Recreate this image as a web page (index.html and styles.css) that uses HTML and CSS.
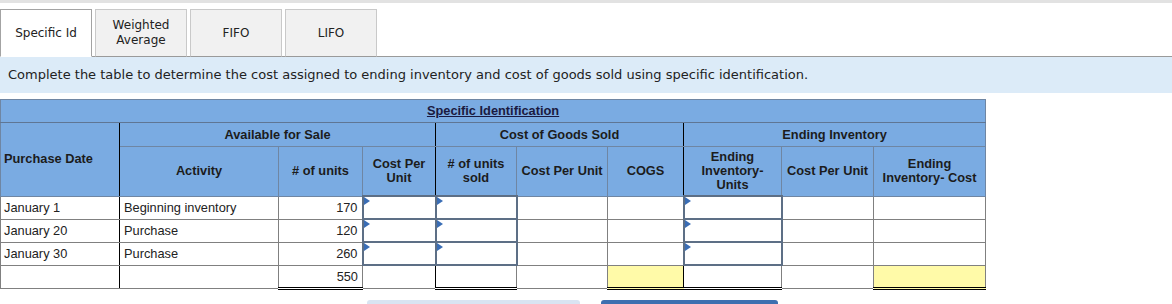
FILE: index.html
```html
<!DOCTYPE html>
<html lang="en">
<head>
    <meta charset="UTF-8">
    <title>Specific Identification</title>
    <link rel="stylesheet" href="styles.css">
</head>
<body>
    <div class="topline"></div>

    <div class="tabs">
        <div class="tab active">Specific Id</div>
        <div class="tab">Weighted<br>Average</div>
        <div class="tab">FIFO</div>
        <div class="tab">LIFO</div>
    </div>

    <div class="instructions">
        Complete the table to determine the cost assigned to ending inventory and cost of goods sold using specific identification.
    </div>

    <table class="worksheet">
        <colgroup>
            <col style="width: 119px">
            <col style="width: 159px">
            <col style="width: 84px">
            <col style="width: 73px">
            <col style="width: 81px">
            <col style="width: 91px">
            <col style="width: 76px">
            <col style="width: 98px">
            <col style="width: 92px">
            <col style="width: 112px">
        </colgroup>
        <thead>
            <tr class="title-row">
                <th colspan="10"><u>Specific Identification</u></th>
            </tr>
            <tr class="group-row">
                <th rowspan="2" class="edge left">Purchase Date</th>
                <th colspan="3" class="edge">Available for Sale</th>
                <th colspan="3" class="edge">Cost of Goods Sold</th>
                <th colspan="3">Ending Inventory</th>
            </tr>
            <tr class="label-row">
                <th>Activity</th>
                <th># of units</th>
                <th class="edge">Cost Per<br>Unit</th>
                <th># of units<br>sold</th>
                <th>Cost Per Unit</th>
                <th class="edge">COGS</th>
                <th>Ending<br>Inventory-<br>Units</th>
                <th>Cost Per Unit</th>
                <th>Ending<br>Inventory- Cost</th>
            </tr>
        </thead>
        <tbody>
            <tr>
                <td class="edge">January 1</td>
                <td>Beginning inventory</td>
                <td class="num">170</td>
                <td class="entry edge"></td>
                <td class="entry"></td>
                <td></td>
                <td class="edge"></td>
                <td class="entry"></td>
                <td></td>
                <td></td>
            </tr>
            <tr>
                <td class="edge">January 20</td>
                <td>Purchase</td>
                <td class="num">120</td>
                <td class="entry edge"></td>
                <td class="entry"></td>
                <td></td>
                <td class="edge"></td>
                <td class="entry"></td>
                <td></td>
                <td></td>
            </tr>
            <tr>
                <td class="edge">January 30</td>
                <td>Purchase</td>
                <td class="num">260</td>
                <td class="entry edge"></td>
                <td class="entry"></td>
                <td></td>
                <td class="edge"></td>
                <td class="entry"></td>
                <td></td>
                <td></td>
            </tr>
            <tr class="total-row">
                <td class="edge"></td>
                <td></td>
                <td class="num total">550</td>
                <td class="edge"></td>
                <td class="total"></td>
                <td></td>
                <td class="total result edge"></td>
                <td class="total"></td>
                <td></td>
                <td class="total result"></td>
            </tr>
        </tbody>
    </table>

    <div class="actions">
        <span class="btn btn-light"></span>
        <span class="btn btn-dark"></span>
    </div>
</body>
</html>
```

FILE: styles.css
```css
body {
    margin: 0;
    font-family: "DejaVu Sans", Verdana, sans-serif;
    background-color: white;
    color: #222;
}

.topline {
    height: 3px;
    background-color: #e2e2e2;
}

/* tab strip */
.tabs {
    display: flex;
    gap: 3px;
    height: 47px;
    margin-top: 6px;
    border-bottom: 1px solid #9a9a9a;
}

.tab {
    width: 92px;
    box-sizing: border-box;
    margin-bottom: -1px;
    display: flex;
    align-items: center;
    justify-content: center;
    text-align: center;
    font-size: 12px;
    line-height: 15px;
    background-color: #f1f1f1;
    border: 1px solid #c9c9c9;
    border-bottom-color: #9a9a9a;
}

.tab.active {
    background-color: white;
    border-color: #a3a3a3;
    border-bottom-color: white;
}

.instructions {
    height: 36px;
    line-height: 36px;
    padding-left: 8px;
    font-size: 13px;
    background-color: #dcebf8;
}

/* worksheet table */
.worksheet {
    table-layout: fixed;
    width: 985px;
    border-collapse: collapse;
    margin-top: 6px;
    font-family: "Liberation Sans", Arial, sans-serif;
    font-size: 12.8px;
}

.worksheet th {
    background-color: #7aabe2;
    color: #1c1c1c;
    font-weight: bold;
    text-align: center;
    padding: 0 2px;
    border: 1px solid #6f86a3;
    line-height: 14px;
}

.worksheet th.left {
    text-align: left;
    padding-left: 3px;
}

.title-row th {
    height: 22px;
    border: 1px solid #6f86a3;
    border-bottom-color: #5f7694;
    color: #1a1a40;
}

.group-row th {
    height: 23px;
}

.label-row th {
    height: 48px;
}

.worksheet td {
    height: 21px;
    padding: 0 4px;
    border: 1px solid #808080;
    color: #222;
    white-space: nowrap;
}

.worksheet td:first-child {
    padding-left: 3px;
}

.worksheet .edge {
    border-right: 1px solid black;
}

.worksheet .num {
    text-align: right;
}

/* answer boxes with their blue corner marker */
.worksheet td.entry {
    position: relative;
    border: 2px solid #5d6f86;
}

.worksheet td.entry::before {
    content: "";
    position: absolute;
    top: 0;
    left: 0;
    border-left: 6px solid #3a6db5;
    border-top: 4px solid transparent;
    border-bottom: 4px solid transparent;
}

.worksheet td.total {
    border-top: 1px solid black;
    border-bottom: 3px double black;
}

.worksheet td.result {
    background-color: #fffaa8;
}

.actions {
    display: flex;
    gap: 21px;
    padding-left: 367px;
    margin-top: 10px;
}

.btn {
    height: 24px;
    border-radius: 3px 3px 0 0;
}

.btn-light {
    width: 213px;
    background-color: #d9e4f2;
}

.btn-dark {
    width: 177px;
    background-color: #3d6fb0;
}
```
